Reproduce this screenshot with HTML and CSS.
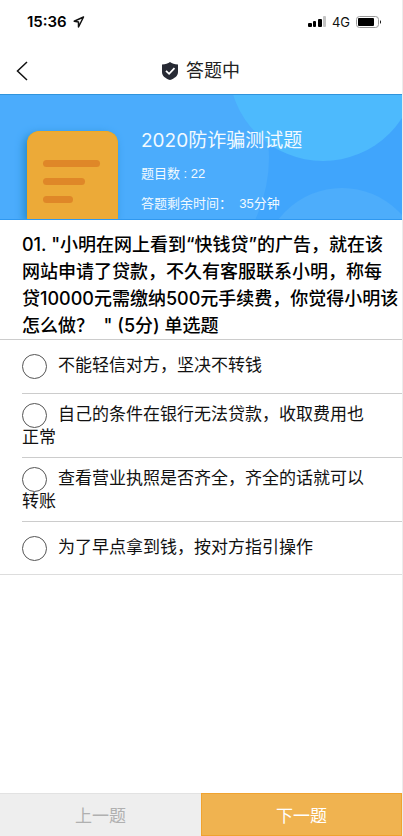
FILE: index.html
```html
<!DOCTYPE html>
<html lang="zh-CN">
<head>
<meta charset="utf-8">
<meta name="viewport" content="width=device-width, initial-scale=1">
<title>答题中</title>
<link rel="stylesheet" href="styles.css">
</head>
<body>
<div class="page">
  <div class="status">
    <div class="status-group">
      <span class="clock">15:36</span>
      <svg class="locate" viewBox="0 0 12 12" aria-hidden="true"><path d="M10.500 1 1.200 5.300l4.300.7v5z"/></svg>
    </div>
    <div class="status-group">
      <svg class="signal" viewBox="0 0 18 12" aria-hidden="true">
        <rect x="0" y="7" width="4" height="4" rx="1"/><rect x="5" y="5" width="3" height="6" rx="1"/><rect x="10" y="3" width="4" height="8" rx="1"/><rect class="dim" x="15" y="0" width="3" height="11" rx="1"/>
      </svg>
      <span class="network">4G</span>
      <svg class="battery" viewBox="0 0 26 12" aria-hidden="true">
        <rect class="shell" x=".5" y=".5" width="22" height="11" rx="3"/><rect x="2" y="2" width="16" height="8" rx="1"/><path d="M24 4q2 2 0 4z"/>
      </svg>
    </div>
  </div>

  <header class="nav">
    <button class="back" type="button" aria-label="返回"><svg viewBox="0 0 12 20" aria-hidden="true"><path d="M11 1 1.500 10l9.500 9"/></svg></button>
    <h1 class="nav-title">
      <svg class="shield" viewBox="0 0 16 18" aria-hidden="true"><path class="plate" d="M8 0c2 1.500 4.500 2.300 8 2.600V10c0 4-3.500 6.500-8 8-4.500-1.500-8-4-8-8V2.600C3.500 2.300 6 1.500 8 0z"/><path class="tick" d="m4 8.800 3.100 3 5.400-5.600"/></svg>
      答题中
    </h1>
  </header>

  <section class="banner">
    <svg class="bubbles" viewBox="0 0 402 126" preserveAspectRatio="xMaxYMid slice" aria-hidden="true">
      <circle class="bubble-wide" cx="120" cy="63" r="149"/>
      <circle class="bubble-top" cx="323" cy="-27" r="94"/>
      <circle class="bubble-low" cx="342" cy="174" r="80"/>
    </svg>
    <div class="sheet"><span class="bar bar-long"></span><span class="bar bar-mid"></span><span class="bar bar-short"></span></div>
    <div class="quiz">
      <h2 class="quiz-title">2020防诈骗测试题</h2>
      <p class="quiz-line">题目数 : 22</p>
      <p class="quiz-line">答题剩余时间：&nbsp; 35分钟</p>
    </div>
  </section>

  <form class="exam">
    <fieldset class="fields">
      <legend class="question">01. "小明在网上看到“快钱贷”的广告，就在该网站申请了贷款，不久有客服联系小明，称每贷10000元需缴纳500元手续费，你觉得小明该怎么做？ &nbsp;" (5分) 单选题</legend>
      <div class="options">
        <div class="option"><label><input type="radio" name="answer" value="a">不能轻信对方，坚决不转钱</label></div>
        <div class="option"><label><input type="radio" name="answer" value="b">自己的条件在银行无法贷款，收取费用也正常</label></div>
        <div class="option"><label><input type="radio" name="answer" value="c">查看营业执照是否齐全，齐全的话就可以转账</label></div>
        <div class="option"><label><input type="radio" name="answer" value="d">为了早点拿到钱，按对方指引操作</label></div>
      </div>
    </fieldset>
    <div class="actions">
      <button class="prev" type="button">上一题</button>
      <button class="next" type="button">下一题</button>
    </div>
  </form>
</div>
</body>
</html>
```
FILE: styles.css
```css
* { box-sizing: border-box; }

body {
  margin: 0;
  background: #fff;
  color: #111;
  font-family: "Liberation Sans", "Noto Sans CJK SC", sans-serif;
}

h1, h2, p { margin: 0; font-weight: 400; }
button { border: 0; padding: 0; background: none; font-family: inherit; }

.page {
  display: flex;
  flex-direction: column;
  min-height: 100vh;
  border-right: 1px solid #ececec;
}

.status {
  display: flex;
  align-items: center;
  justify-content: space-between;
  height: 44px;
  padding: 0 20px 0 27px;
}
.status-group { display: flex; align-items: center; gap: 6px; }
.clock { font: 600 15px/20px Inter, sans-serif; color: #000; }
.locate { width: 12px; height: 12px; fill: none; stroke: #111; stroke-width: 1.5; stroke-linejoin: round; }
.signal { width: 18px; height: 12px; }
.dim { fill: #c4c4c4; }
.network { font: 400 13px/20px Inter, sans-serif; color: #111; }
.battery { width: 26px; height: 12px; }
.shell { fill: none; stroke: #999; }

.nav {
  position: relative;
  display: flex;
  align-items: center;
  justify-content: center;
  height: 50px;
  padding-top: 4px;
}
.back { position: absolute; left: 16px; top: 17px; width: 12px; height: 20px; }
.back svg { display: block; width: 12px; height: 20px; fill: none; stroke: #111; stroke-width: 1.5; }
.nav-title { display: flex; align-items: center; gap: 8px; font-size: 18px; line-height: 24px; color: #222; }
.shield { width: 16px; height: 18px; }
.plate { fill: #272a34; }
.tick { fill: none; stroke: #fff; stroke-width: 1.8; }

.banner {
  position: relative;
  display: flex;
  gap: 23px;
  height: 126px;
  padding-left: 27px;
  overflow: hidden;
  background: #40a5fc;
  border-top: 1px solid #3094dc;
  border-bottom: 1px solid #2f98f0;
  color: #f2faff;
}
.bubbles { position: absolute; inset: 0; width: 100%; height: 100%; }
.bubble-wide { fill: #4bacfc; }
.bubble-top { fill: #4dbafd; }
.bubble-low { fill: #4dadfb; }
.sheet {
  position: relative;
  display: flex;
  flex-direction: column;
  gap: 11px;
  width: 91px;
  margin-top: 36px;
  padding: 28px 15px 0;
  border: 1px solid #f2a91f;
  border-bottom: 0;
  border-radius: 12px 12px 0 0;
  background: #ecaa38;
  box-shadow: -3px 3px 8px #2689c9;
}
.bar { height: 7px; border-radius: 4px; background: #df8728; }
.bar-long { width: 57px; }
.bar-mid { width: 42px; }
.bar-short { width: 30px; }
.quiz { position: relative; padding-top: 32px; }
.quiz-title { font: 400 19px/28px Inter, "Noto Sans CJK SC", sans-serif; margin-bottom: 4px; }
.quiz-line { font-size: 13px; line-height: 30px; }

.exam { flex: 1; display: flex; flex-direction: column; }
.fields { margin: 0; padding: 0; border: 0; min-width: 0; }
.question {
  padding: 11px 3px 0 22px;
  font: 500 18px/27px Inter, "Noto Sans CJK SC", sans-serif;
  color: #000;
}
.options { border-top: 1px solid #ccc; border-bottom: 1px solid #ddd; }
.option {
  display: flex;
  align-items: center;
  min-height: 53px;
  margin-left: 22px;
  padding: 9px 24px 9px 0;
  font-size: 17px;
  line-height: 20px;
}
.option + .option { border-top: 1px solid #ccc; }
.option input {
  appearance: none;
  width: 25px;
  height: 25px;
  margin: 0 11px 0 0;
  vertical-align: middle;
  border: 1px solid #555;
  border-radius: 50%;
}
.option input:checked { background: #f0b350; }

.actions { display: grid; grid-template-columns: 1fr 1fr; height: 43px; margin-top: auto; }
.actions button { padding-top: 4px; font-size: 17px; line-height: 24px; }
.prev { background: #eee; border-top: 1px solid #e2e2e2; color: #b0b0b0; }
.actions .next { background: #f0b350; border: 1px solid #f0a330; color: #fff; }
```
